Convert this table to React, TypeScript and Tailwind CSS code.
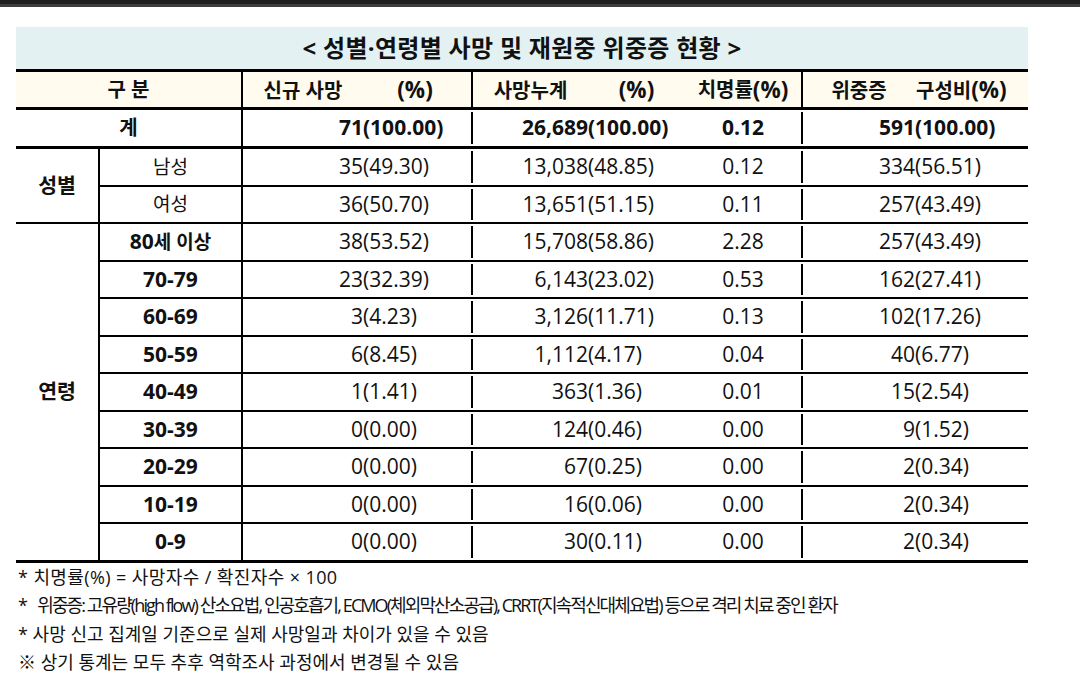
import React from "react";

type Row = {
  label: string;
  num: string;
  n1: string;
  p1: string;
  n2: string;
  p2: string;
  rate: string;
  n3: string;
  p3: string;
};

const genderRows: Row[] = [
  { label: "남성", num: "", n1: "35", p1: "(49.30)", n2: "13,038", p2: "(48.85)", rate: "0.12", n3: "334", p3: "(56.51)" },
  { label: "여성", num: "", n1: "36", p1: "(50.70)", n2: "13,651", p2: "(51.15)", rate: "0.11", n3: "257", p3: "(43.49)" },
];

const ageRows: Row[] = [
  { label: "세 이상", num: "80", n1: "38", p1: "(53.52)", n2: "15,708", p2: "(58.86)", rate: "2.28", n3: "257", p3: "(43.49)" },
  { label: "", num: "70-79", n1: "23", p1: "(32.39)", n2: "6,143", p2: "(23.02)", rate: "0.53", n3: "162", p3: "(27.41)" },
  { label: "", num: "60-69", n1: "3", p1: "(4.23)", n2: "3,126", p2: "(11.71)", rate: "0.13", n3: "102", p3: "(17.26)" },
  { label: "", num: "50-59", n1: "6", p1: "(8.45)", n2: "1,112", p2: "(4.17)", rate: "0.04", n3: "40", p3: "(6.77)" },
  { label: "", num: "40-49", n1: "1", p1: "(1.41)", n2: "363", p2: "(1.36)", rate: "0.01", n3: "15", p3: "(2.54)" },
  { label: "", num: "30-39", n1: "0", p1: "(0.00)", n2: "124", p2: "(0.46)", rate: "0.00", n3: "9", p3: "(1.52)" },
  { label: "", num: "20-29", n1: "0", p1: "(0.00)", n2: "67", p2: "(0.25)", rate: "0.00", n3: "2", p3: "(0.34)" },
  { label: "", num: "10-19", n1: "0", p1: "(0.00)", n2: "16", p2: "(0.06)", rate: "0.00", n3: "2", p3: "(0.34)" },
  { label: "", num: "0-9", n1: "0", p1: "(0.00)", n2: "30", p2: "(0.11)", rate: "0.00", n3: "2", p3: "(0.34)" },
];

const Ko = ({ children, className = "" }: { children: React.ReactNode; className?: string }) => (
  <span className={className}>{children}</span>
);

const DataCells = ({ r, bold }: { r: Row; bold?: boolean }) => (
  <div className={`flex text-[21px] whitespace-nowrap ${bold ? "font-bold" : ""}`}>
    <div className="w-[120px] text-right">{r.n1}</div>
    <div className="w-[110px] border-r-2 border-black">{r.p1}</div>
    <div className="w-[115px] text-right">{r.n2}</div>
    <div className="w-[97px]">{r.p2}</div>
    <div className="w-[118px] text-center border-r-2 border-black">{r.rate}</div>
    <div className="w-[112px] text-right">{r.n3}</div>
    <div className="w-[113px]">{r.p3}</div>
  </div>
);

const BodyRow = ({ r, last }: { r: Row; last?: boolean }) => (
  <div className={`flex h-[35.5px] items-center ${last ? "" : "border-b-2 border-black"} box-content`}>
    <div className="w-[143px] h-full flex items-center justify-center border-r-2 border-black whitespace-nowrap">
      {r.num ? (
        <span className="font-bold text-[21px]">
          {r.num}
          {r.label && <Ko className="font-bold text-[19px]">{r.label}</Ko>}
        </span>
      ) : (
        <Ko className="text-[19px]">{r.label}</Ko>
      )}
    </div>
    <DataCells r={r} />
  </div>
);

export default function App() {
  return (
    <div className="w-[1080px] h-[686px] bg-white text-[#111] font-['Open_Sans','Noto_Sans_CJK_KR',sans-serif] overflow-hidden">
      <div className="h-[4px] bg-[#1f1f1f]" />
      <div className="h-[3px] bg-[#3d3d3d]" />
      <div className="ml-[16px] mt-[20px] w-[1012px]">
        <div className="h-[42px] bg-[#e4f1f2] flex items-center justify-center">
          <span className="text-[24px] font-bold tracking-[0.3px]">&lt; 성별·연령별 사망 및 재원중 위중증 현황 &gt;</span>
        </div>
        <div className="h-[3px] bg-black" />
        <div className="h-[35px] bg-[#fffcef] flex items-center font-bold text-[22.5px] whitespace-nowrap">
          <div className="w-[227px] h-full flex items-center justify-center border-r-2 border-black">
            <Ko className="font-semibold text-[20px]">구 분</Ko>
          </div>
          <div className="w-[120px] text-center"><Ko className="font-semibold text-[20px]">신규 사망</Ko></div>
          <div className="w-[110px] h-full flex items-center justify-center border-r-2 border-black pr-[4px]">(%)</div>
          <div className="w-[115px] text-center"><Ko className="font-semibold text-[20px]">사망누계</Ko></div>
          <div className="w-[97px] text-center">(%)</div>
          <div className="w-[118px] h-full flex items-center justify-center border-r-2 border-black">
            <Ko className="font-semibold text-[20px]">치명률</Ko>(%)
          </div>
          <div className="w-[112px] text-center"><Ko className="font-semibold text-[20px]">위중증</Ko></div>
          <div className="w-[113px] text-left pl-[1px]"><Ko className="font-semibold text-[20px]">구성비</Ko>(%)</div>
        </div>
        <div className="h-[3px] bg-black" />
        <div className="h-[36px] flex items-center">
          <div className="w-[227px] h-full flex items-center justify-center border-r-2 border-black">
            <Ko className="font-bold text-[20px]">계</Ko>
          </div>
          <DataCells
            bold
            r={{ label: "", num: "", n1: "71", p1: "(100.00)", n2: "26,689", p2: "(100.00)", rate: "0.12", n3: "591", p3: "(100.00)" }}
          />
        </div>
        <div className="h-[3px] bg-black" />
        <div className="flex">
          <div className="w-[84px] flex items-center justify-center border-r-2 border-black">
            <Ko className="font-bold text-[20.5px]">성별</Ko>
          </div>
          <div className="flex flex-col">
            {genderRows.map((r, i) => (
              <BodyRow key={r.label} r={r} last={i === genderRows.length - 1} />
            ))}
          </div>
        </div>
        <div className="h-[2px] bg-black" />
        <div className="flex">
          <div className="w-[84px] flex items-center justify-center border-r-2 border-black">
            <Ko className="font-bold text-[20.5px]">연령</Ko>
          </div>
          <div className="flex flex-col">
            {ageRows.map((r, i) => (
              <BodyRow key={r.num} r={r} last={i === ageRows.length - 1} />
            ))}
          </div>
        </div>
        <div className="h-[3px] bg-black" />
      </div>
      <div className="ml-[18px] text-[18px] leading-[28.5px] whitespace-nowrap">
        <p className="tracking-[0.4px]">* 치명률(%) = 사망자수 / 확진자수 × 100</p>
        <p>
          *&nbsp; <span className="tracking-[-1.9px]">위중증: 고유량(high flow) 산소요법, 인공호흡기, ECMO(체외막산소공급), CRRT(지속적신대체요법) 등으로 격리 치료 중인 환자</span>
        </p>
        <p>* 사망 신고 집계일 기준으로 실제 사망일과 차이가 있을 수 있음</p>
        <p>※ 상기 통계는 모두 추후 역학조사 과정에서 변경될 수 있음</p>
      </div>
    </div>
  );
}
